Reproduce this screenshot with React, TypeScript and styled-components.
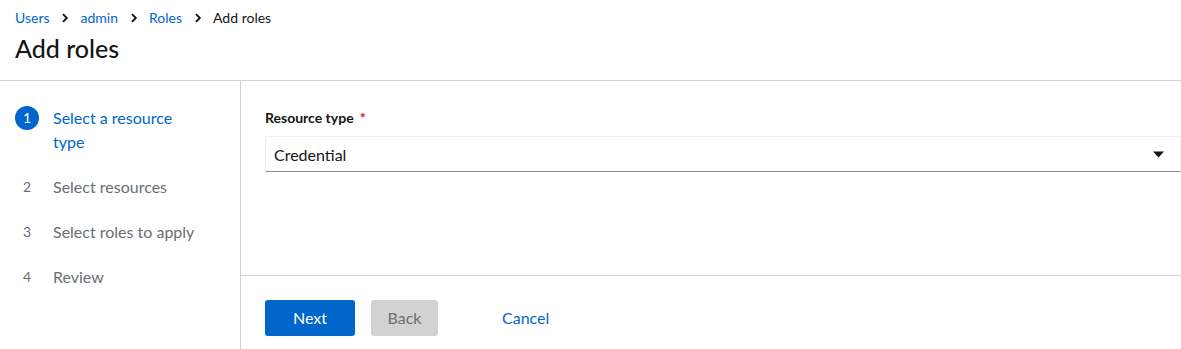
import React from "react";
import styled, { createGlobalStyle } from "styled-components";

const Global = createGlobalStyle`
  html, body { margin: 0; padding: 0; background: #fff; }
  body { font-family: Lato, "Liberation Sans", sans-serif; color: #151515; }
  * { box-sizing: border-box; }
`;

const Page = styled.div`
  width: 1181px;
  height: 349px;
  display: flex;
  flex-direction: column;
  overflow: hidden;
`;

const Header = styled.header`
  flex: 0 0 81px;
  padding: 8px 15px 0;
  border-bottom: 1px solid #d2d2d2;
`;

const Crumbs = styled.nav`
  display: flex;
  align-items: center;
  font-size: 14px;
  line-height: 20px;
`;

const Crumb = styled.a<{ $current?: boolean }>`
  color: ${(p) => (p.$current ? "#151515" : "#0066cc")};
  text-decoration: none;
`;

const Sep = styled.span`
  display: inline-flex;
  width: 31px;
  justify-content: center;
  color: #151515;
`;

const Title = styled.h1`
  margin: 4px 0 0;
  font-size: 25px;
  line-height: 32px;
  font-weight: 500;
`;

const Body = styled.div`
  flex: 1;
  min-height: 0;
  display: flex;
`;

const Nav = styled.ol`
  width: 241px;
  margin: 0;
  padding: 25px 15px 0;
  list-style: none;
  border-right: 1px solid #d2d2d2;
  display: flex;
  flex-direction: column;
  gap: 21px;
`;

const Step = styled.li<{ $active?: boolean }>`
  display: flex;
  align-items: flex-start;
  gap: 14px;
  font-size: 16px;
  line-height: 24px;
  color: ${(p) => (p.$active ? "#0066cc" : "#6a6e73")};
`;

const StepText = styled.span<{ $wrap?: boolean }>`
  max-width: ${(p) => (p.$wrap ? "140px" : "none")};
`;

const Num = styled.span<{ $active?: boolean }>`
  flex: 0 0 24px;
  width: 24px;
  height: 24px;
  border-radius: 50%;
  display: flex;
  align-items: center;
  justify-content: center;
  font-size: 14px;
  background: ${(p) => (p.$active ? "#0066cc" : "transparent")};
  color: ${(p) => (p.$active ? "#fff" : "#6a6e73")};
`;

const Main = styled.div`
  flex: 1;
  display: flex;
  flex-direction: column;
`;

const Content = styled.div`
  flex: 0 0 195px;
  padding: 27px 0 0 24px;
  border-bottom: 1px solid #d2d2d2;
`;

const Label = styled.label`
  display: flex;
  align-items: center;
  gap: 6px;
  font-size: 14px;
  font-weight: 700;
  line-height: 20px;
`;

const Req = styled.span`
  color: #c9190b;
`;

const Select = styled.div`
  margin-top: 8px;
  height: 36px;
  display: flex;
  align-items: center;
  justify-content: space-between;
  padding: 0 16px 0 8px;
  border-top: 1px solid #f0f0f0;
  border-right: 1px solid #f0f0f0;
  border-left: 1px solid #f0f0f0;
  border-bottom: 1px solid #8a8d90;
  font-size: 16px;
  color: #151515;
`;

const Footer = styled.div`
  flex: 1;
  padding: 24px 24px 0;
  display: flex;
  align-items: flex-start;
  gap: 16px;
`;

const Btn = styled.button<{ $variant: "primary" | "disabled" | "link" }>`
  height: 36px;
  border: none;
  border-radius: 3px;
  font-family: inherit;
  font-size: 16px;
  line-height: 34px;
  padding: 0 ${(p) => (p.$variant === "link" ? "16px" : "0")};
  width: ${(p) => (p.$variant === "primary" ? "90px" : p.$variant === "disabled" ? "67px" : "auto")};
  margin-left: ${(p) => (p.$variant === "link" ? "32px" : "0")};
  background: ${(p) =>
    p.$variant === "primary" ? "#0066cc" : p.$variant === "disabled" ? "#d2d2d2" : "transparent"};
  color: ${(p) =>
    p.$variant === "primary" ? "#fff" : p.$variant === "disabled" ? "#6a6e73" : "#0066cc"};
`;

const Chevron = () => (
  <svg width="8" height="10" viewBox="0 0 8 10">
    <path d="M2 1.2 L5.8 5 L2 8.8" fill="none" stroke="#151515" strokeWidth="1.9" />
  </svg>
);

const Caret = () => (
  <svg width="11" height="7" viewBox="0 0 11 7">
    <path d="M0 0.5 H11 L5.5 6.5 Z" fill="#151515" />
  </svg>
);

export default function App() {
  const steps = ["Select a resource type", "Select resources", "Select roles to apply", "Review"];
  return (
    <Page>
      <Global />
      <Header>
        <Crumbs>
          <Crumb href="#">Users</Crumb>
          <Sep><Chevron /></Sep>
          <Crumb href="#">admin</Crumb>
          <Sep><Chevron /></Sep>
          <Crumb href="#">Roles</Crumb>
          <Sep><Chevron /></Sep>
          <Crumb $current>Add roles</Crumb>
        </Crumbs>
        <Title>Add roles</Title>
      </Header>
      <Body>
        <Nav>
          {steps.map((s, i) => (
            <Step key={s} $active={i === 0}>
              <Num $active={i === 0}>{i + 1}</Num>
              <StepText $wrap={i === 0}>{s}</StepText>
            </Step>
          ))}
        </Nav>
        <Main>
          <Content>
            <Label>
              Resource type <Req>*</Req>
            </Label>
            <Select>
              <span>Credential</span>
              <Caret />
            </Select>
          </Content>
          <Footer>
            <Btn $variant="primary">Next</Btn>
            <Btn $variant="disabled">Back</Btn>
            <Btn $variant="link">Cancel</Btn>
          </Footer>
        </Main>
      </Body>
    </Page>
  );
}
